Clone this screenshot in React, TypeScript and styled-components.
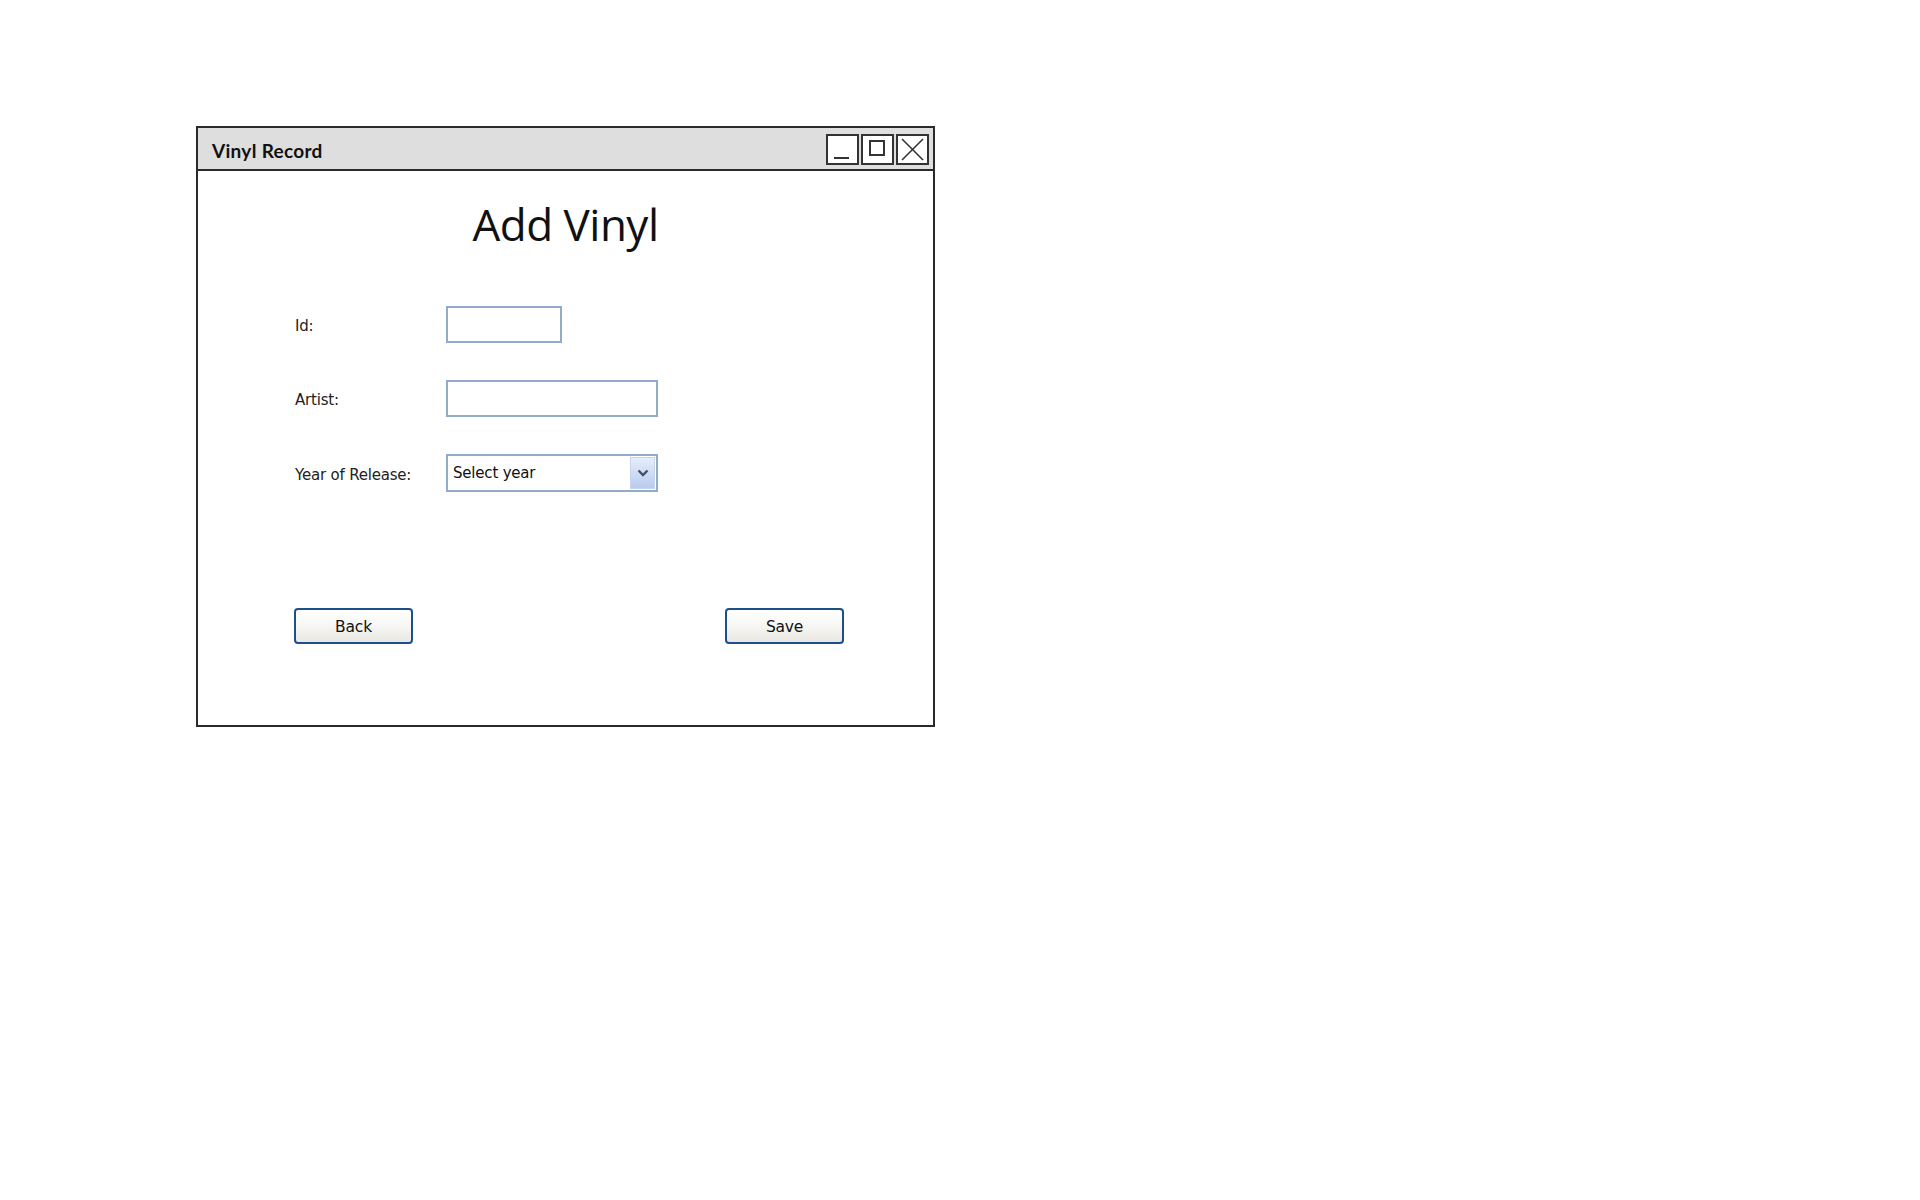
import React from "react";
import styled, { createGlobalStyle } from "styled-components";

const Global = createGlobalStyle`
  html, body { margin: 0; padding: 0; background: #ffffff; }
  body { font-family: "DejaVu Sans", "Liberation Sans", sans-serif; }
  * { box-sizing: border-box; }
`;

const Window = styled.div`
  width: 739px;
  height: 601px;
  margin: 126px 0 0 196px;
  border: 2px solid #2a2a2a;
  display: flex;
  flex-direction: column;
  background: #fff;
`;

const TitleBar = styled.div`
  height: 43px;
  background: #dedede;
  border-bottom: 2px solid #2a2a2a;
  display: flex;
  align-items: center;
  justify-content: space-between;
  padding: 0 4px 0 14px;
`;

const Title = styled.span`
  font-family: "Lato", "DejaVu Sans", sans-serif;
  font-weight: 700;
  font-size: 19px;
  color: #111;
  letter-spacing: 0.3px;
  padding-top: 4px;
`;

const Controls = styled.div`
  display: flex;
  gap: 2px;
  margin-top: 2px;
`;

const CtrlBox = styled.div`
  width: 33px;
  height: 31px;
  border: 2px solid #333;
  background: #fff;
  display: flex;
  align-items: center;
  justify-content: center;
`;

const Body = styled.div`
  flex: 1;
  display: flex;
  flex-direction: column;
`;

const Heading = styled.h1`
  margin: 25px 0 0 0;
  font-family: "Open Sans", "DejaVu Sans", sans-serif;
  font-weight: 400;
  font-size: 44px;
  line-height: 56px;
  text-align: center;
  color: #111;
  letter-spacing: -0.5px;
`;

const Form = styled.div`
  margin: 54px 0 0 97px;
  display: grid;
  grid-template-columns: 151px auto;
  row-gap: 37px;
  align-items: center;
`;

const Label = styled.label`
  font-family: "DejaVu Sans", sans-serif;
  font-size: 15px;
  color: #222;
  letter-spacing: -0.2px;
  padding-top: 3px;
`;

const TextBox = styled.div<{ $w: number }>`
  width: ${(p) => p.$w}px;
  height: 37px;
  border: 2px solid #93abcb;
  background: #fff;
`;

const Select = styled.div`
  width: 212px;
  height: 38px;
  border: 2px solid #93abcb;
  background: #fff;
  display: flex;
  align-items: center;
  justify-content: space-between;
  padding: 0 1px 0 5px;
  font-family: "DejaVu Sans", sans-serif;
  font-size: 15px;
  color: #111;
  letter-spacing: -0.2px;
`;

const DropBtn = styled.div`
  width: 25px;
  height: 32px;
  border: 1px solid #c6d4ec;
  background: linear-gradient(#e6eefb, #b8cbef);
  display: flex;
  align-items: center;
  justify-content: center;
`;

const ButtonRow = styled.div`
  margin: 116px 89px 0 96px;
  display: flex;
  justify-content: space-between;
`;

const Button = styled.button`
  width: 119px;
  height: 36px;
  border: 2px solid #1d4f8c;
  border-radius: 4px;
  background: linear-gradient(#ffffff 0%, #f6f6f3 50%, #e8e7e1 100%);
  font-family: "DejaVu Sans", sans-serif;
  font-size: 15.5px;
  color: #111;
  letter-spacing: -0.2px;
  padding: 2px 0 0 0;
`;

export default function App() {
  return (
    <>
      <Global />
      <Window>
        <TitleBar>
          <Title>Vinyl Record</Title>
          <Controls>
            <CtrlBox>
              <svg width="29" height="27" viewBox="0 0 29 27">
                <line x1="6" y1="22" x2="21" y2="22" stroke="#333" strokeWidth="2" />
              </svg>
            </CtrlBox>
            <CtrlBox>
              <svg width="29" height="27" viewBox="0 0 29 27">
                <rect x="7" y="5" width="14" height="14" fill="none" stroke="#333" strokeWidth="2" />
              </svg>
            </CtrlBox>
            <CtrlBox>
              <svg width="29" height="27" viewBox="0 0 29 27">
                <line x1="4" y1="3" x2="25" y2="24" stroke="#333" strokeWidth="1.6" />
                <line x1="25" y1="3" x2="4" y2="24" stroke="#333" strokeWidth="1.6" />
              </svg>
            </CtrlBox>
          </Controls>
        </TitleBar>
        <Body>
          <Heading>Add Vinyl</Heading>
          <Form>
            <Label>Id:</Label>
            <TextBox $w={116} />
            <Label>Artist:</Label>
            <TextBox $w={212} />
            <Label>Year of Release:</Label>
            <Select>
              <span>Select year</span>
              <DropBtn>
                <svg width="12" height="8" viewBox="0 0 12 8">
                  <polyline points="1.5,1.5 6,6 10.5,1.5" fill="none" stroke="#3f4f6e" strokeWidth="2.4" />
                </svg>
              </DropBtn>
            </Select>
          </Form>
          <ButtonRow>
            <Button>Back</Button>
            <Button>Save</Button>
          </ButtonRow>
        </Body>
      </Window>
    </>
  );
}
